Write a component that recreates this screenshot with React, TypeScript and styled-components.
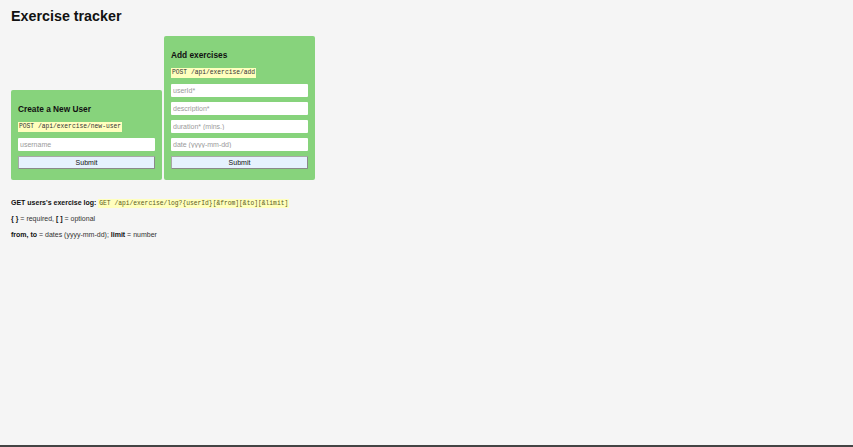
import * as React from "react";
import styled, { createGlobalStyle } from "styled-components";

const GlobalStyle = createGlobalStyle`
  html, body {
    margin: 0;
    padding: 0;
    background: #f5f5f5;
  }
  body {
    font-family: "Liberation Sans", Arial, sans-serif;
    font-size: 7px;
    color: #222;
  }
`;

const Page = styled.div`
  min-height: 100vh;
  display: flex;
  flex-direction: column;
  box-sizing: border-box;
`;

const Main = styled.main`
  flex: 1;
  padding: 0 11px;
`;

const Title = styled.h1`
  margin: 8px 0 0;
  font-size: 14.3px;
  line-height: 16px;
  font-weight: 700;
  color: #111;
`;

const Forms = styled.div`
  display: flex;
  align-items: flex-end;
  gap: 2px;
  margin-top: 12px;
`;

const Card = styled.form`
  width: 151px;
  box-sizing: border-box;
  padding: 14px 7px 10.5px;
  background: #87d37c;
  border-radius: 2px;
  display: flex;
  flex-direction: column;
`;

const CardTitle = styled.h3`
  margin: 0;
  font-size: 8.3px;
  line-height: 10px;
  font-weight: 700;
  color: #111;
`;

const Code = styled.code`
  font-family: "Liberation Mono", "DejaVu Sans Mono", monospace;
  font-size: 6.3px;
  background: #ffffbe;
  color: #333;
  padding: 0 1px;
`;

const Endpoint = styled(Code)`
  align-self: flex-start;
  display: block;
  margin: 8px 0 6px;
  height: 10px;
  line-height: 10px;
`;

const Field = styled.input`
  display: block;
  box-sizing: border-box;
  width: 100%;
  height: 13px;
  margin: 0 0 5px;
  padding: 0 2px;
  border: none;
  border-radius: 1px;
  background: #fff;
  font-family: "Liberation Sans", Arial, sans-serif;
  font-size: 7px;
  color: #222;
  outline: none;
  &::placeholder {
    color: #9a9a9a;
  }
`;

const Submit = styled.button`
  display: block;
  box-sizing: border-box;
  width: 100%;
  height: 13px;
  padding: 0;
  border: 1px solid #8a8a8a;
  border-top-color: #a8a8a8;
  border-left-color: #a8a8a8;
  border-radius: 1px;
  background: #e6f2fe;
  font-family: "Liberation Sans", Arial, sans-serif;
  font-size: 7px;
  color: #111;
  cursor: pointer;
`;

const Notes = styled.div`
  margin-top: 19px;
`;

const Note = styled.p`
  margin: 0 0 7.6px;
  font-size: 7px;
  line-height: 8px;
  color: #333;
  b {
    color: #111;
  }
`;

const LogCode = styled(Code)`
  color: #5a5a1a;
  padding: 1px 1px;
`;

const BottomBar = styled.div`
  height: 2px;
  background: #444;
`;

const NewUserForm: React.FC = () => (
  <Card onSubmit={(e) => e.preventDefault()}>
    <CardTitle>Create a New User</CardTitle>
    <Endpoint>POST /api/exercise/new-user</Endpoint>
    <Field type="text" placeholder="username" />
    <Submit type="submit">Submit</Submit>
  </Card>
);

const AddExerciseForm: React.FC = () => (
  <Card onSubmit={(e) => e.preventDefault()}>
    <CardTitle>Add exercises</CardTitle>
    <Endpoint>POST /api/exercise/add</Endpoint>
    <Field type="text" placeholder="userId*" />
    <Field type="text" placeholder="description*" />
    <Field type="text" placeholder="duration* (mins.)" />
    <Field type="text" placeholder="date (yyyy-mm-dd)" />
    <Submit type="submit">Submit</Submit>
  </Card>
);

export default function App() {
  return (
    <Page>
      <GlobalStyle />
      <Main>
        <Title>Exercise tracker</Title>
        <Forms>
          <NewUserForm />
          <AddExerciseForm />
        </Forms>
        <Notes>
          <Note>
            <b>GET users's exercise log: </b>
            <LogCode>GET /api/exercise/log?{"{userId}"}[&amp;from][&amp;to][&amp;limit]</LogCode>
          </Note>
          <Note>
            <b>{"{ }"}</b> = required, <b>[ ]</b> = optional
          </Note>
          <Note>
            <b>from, to</b> = dates (yyyy-mm-dd); <b>limit</b> = number
          </Note>
        </Notes>
      </Main>
      <BottomBar />
    </Page>
  );
}
